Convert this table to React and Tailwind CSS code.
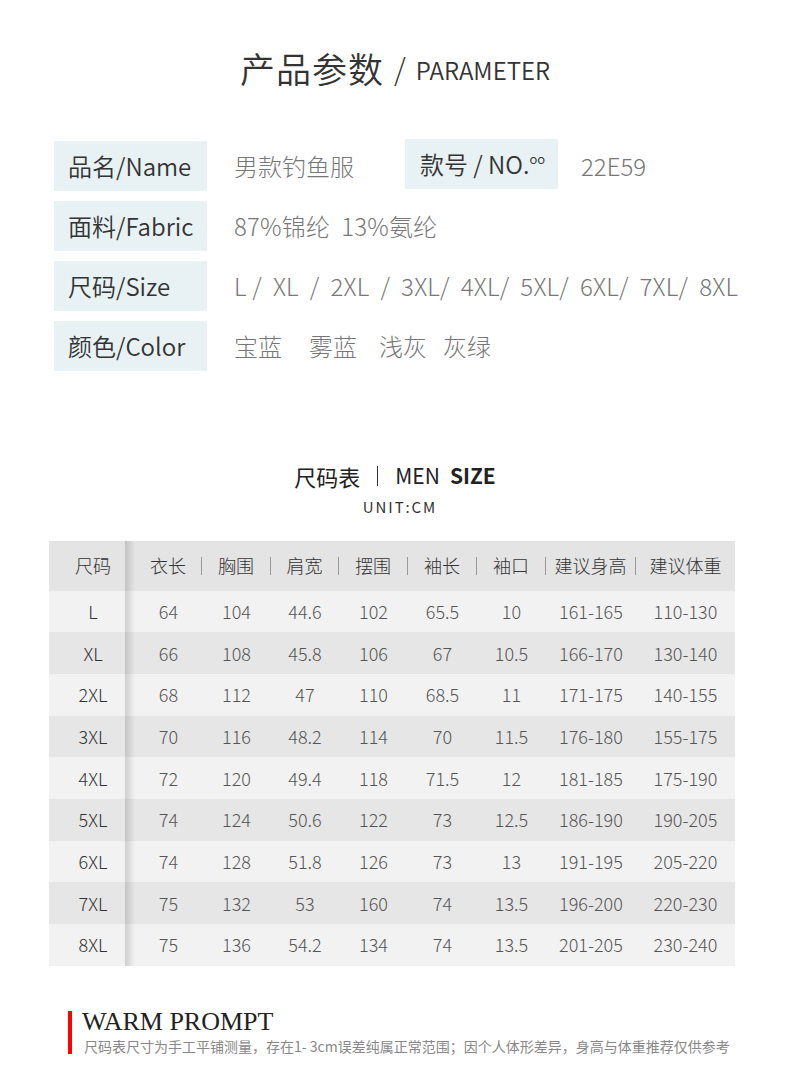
const CJK = { fontFamily: '"Noto Sans CJK SC", "Noto Sans", sans-serif' };

const INFO = [
  { label: '面料/Fabric', value: '87%锦纶  13%氨纶' },
  { label: '尺码/Size', value: 'L /  XL  /  2XL  /  3XL/  4XL/  5XL/  6XL/  7XL/  8XL' },
];

const COLORS = [
  { name: '宝蓝', cls: '' },
  { name: '雾蓝', cls: 'ml-[27px]' },
  { name: '浅灰', cls: 'ml-[22px]' },
  { name: '灰绿', cls: 'ml-[16px]' },
];

const HEADERS = ['衣长', '胸围', '肩宽', '摆围', '袖长', '袖口', '建议身高', '建议体重'];
const WIDTHS = ['w-[67px]', 'w-[69px]', 'w-[68px]', 'w-[69px]', 'w-[69px]', 'w-[69px]', 'w-[90px]', 'w-[99px]'];

const ROWS = [
  ['L', '64', '104', '44.6', '102', '65.5', '10', '161-165', '110-130'],
  ['XL', '66', '108', '45.8', '106', '67', '10.5', '166-170', '130-140'],
  ['2XL', '68', '112', '47', '110', '68.5', '11', '171-175', '140-155'],
  ['3XL', '70', '116', '48.2', '114', '70', '11.5', '176-180', '155-175'],
  ['4XL', '72', '120', '49.4', '118', '71.5', '12', '181-185', '175-190'],
  ['5XL', '74', '124', '50.6', '122', '73', '12.5', '186-190', '190-205'],
  ['6XL', '74', '128', '51.8', '126', '73', '13', '191-195', '205-220'],
  ['7XL', '75', '132', '53', '160', '74', '13.5', '196-200', '220-230'],
  ['8XL', '75', '136', '54.2', '134', '74', '13.5', '201-205', '230-240'],
];

function Label({ children }) {
  return (
    <div className="w-[153px] h-[50px] bg-[#e8f1f3] flex items-center pl-[14px] text-[24px] text-[#333] font-[350] whitespace-nowrap">
      {children}
    </div>
  );
}

export default function App() {
  return (
    <div className="w-[790px] h-[1090px] bg-white overflow-hidden" style={CJK}>
      {/* title */}
      <div className="pt-[40px] flex items-center justify-center text-[#333] h-[96px]">
        <span className="text-[35px] tracking-[1px] font-[350]">产品参数</span>
        <span className="text-[30px] font-light mx-[10px]">/</span>
        <span className="text-[24px] mt-[4px] font-[350]">PARAMETER</span>
      </div>

      {/* info */}
      <div className="mt-[45px] pl-[54px] flex flex-col gap-[10px]">
        <div className="flex items-center">
          <Label>品名/Name</Label>
          <div className="ml-[27px] w-[171px] text-[24px] text-[#777] font-light">男款钓鱼服</div>
          <div className="w-[153px] h-[50px] -mt-[4px] bg-[#e8f1f3] flex items-center pl-[15px] text-[24px] text-[#333] font-[350] whitespace-nowrap">
            款号 / NO.<span className="text-[13px] -mt-[10px]">oo</span>
          </div>
          <div className="ml-[23px] text-[24px] text-[#777] font-light">22E59</div>
        </div>
        {INFO.map(r => (
          <div key={r.label} className="flex items-center">
            <Label>{r.label}</Label>
            <div className="ml-[27px] text-[24px] text-[#777] font-light whitespace-pre tracking-[0.2px]">{r.value}</div>
          </div>
        ))}
        <div className="flex items-center">
          <Label>颜色/Color</Label>
          <div className="ml-[27px] flex text-[24px] text-[#777] font-light">
            {COLORS.map(c => (
              <span key={c.name} className={c.cls}>{c.name}</span>
            ))}
          </div>
        </div>
      </div>

      {/* size chart title */}
      <div className="mt-[90px] flex items-center justify-center text-[#222] h-[30px]">
        <span className="text-[22px]">尺码表</span>
        <span className="w-px h-[20px] bg-[#333] mx-[17px]" />
        <span className="text-[21px]">MEN</span>
        <span className="text-[21px] font-bold ml-[10px]">SIZE</span>
      </div>
      <div className="mt-[5px] text-center text-[15px] tracking-[2px] text-[#333] pl-[10px]">UNIT:CM</div>

      {/* table */}
      <div className="mt-[22px] ml-[49px] w-[686px]">
        <div className="flex h-[50px] bg-[#e4e4e4] items-center text-[18px] text-[#333] font-light">
          <div className="w-[76px] text-center pl-[12px] self-stretch flex items-center justify-center">尺码</div>
          <div className="w-[10px] self-stretch bg-gradient-to-r from-black/15 to-transparent" />
          {HEADERS.map((h, i) => (
            <div key={h} className={`${WIDTHS[i]} flex items-center`}>
              <span className="flex-1 text-center">{h}</span>
              {i < HEADERS.length - 1 && <span className="w-px h-[18px] bg-[#999]" />}
            </div>
          ))}
        </div>
        {ROWS.map((r, ri) => (
          <div
            key={r[0]}
            className={`flex h-[41.7px] items-center text-[18px] text-[#555] font-light ${ri % 2 === 0 ? 'bg-[#f2f2f2]' : 'bg-[#e6e6e6]'}`}
          >
            <div className="w-[76px] text-center pl-[12px] text-[#333]">{r[0]}</div>
            <div className="w-[10px] self-stretch bg-gradient-to-r from-black/15 to-transparent" />
            {r.slice(1).map((v, i) => (
              <div key={i} className={`${WIDTHS[i]} text-center`}>{v}</div>
            ))}
          </div>
        ))}
      </div>

      {/* warm prompt */}
      <div className="mt-[45px] ml-[68px] flex">
        <div className="w-[4px] h-[43px] bg-[#ff0000]" />
        <div className="ml-[10px] -mt-[4px]">
          <div className="text-[26px] leading-[30px] text-[#222]" style={{ fontFamily: '"Liberation Serif", serif' }}>WARM PROMPT</div>
          <div className="text-[14px] leading-[19px] text-[#888] ml-[2px] whitespace-nowrap">
            尺码表尺寸为手工平铺测量，存在1- 3cm误差纯属正常范围；因个人体形差异，身高与体重推荐仅供参考
          </div>
        </div>
      </div>
    </div>
  );
}
